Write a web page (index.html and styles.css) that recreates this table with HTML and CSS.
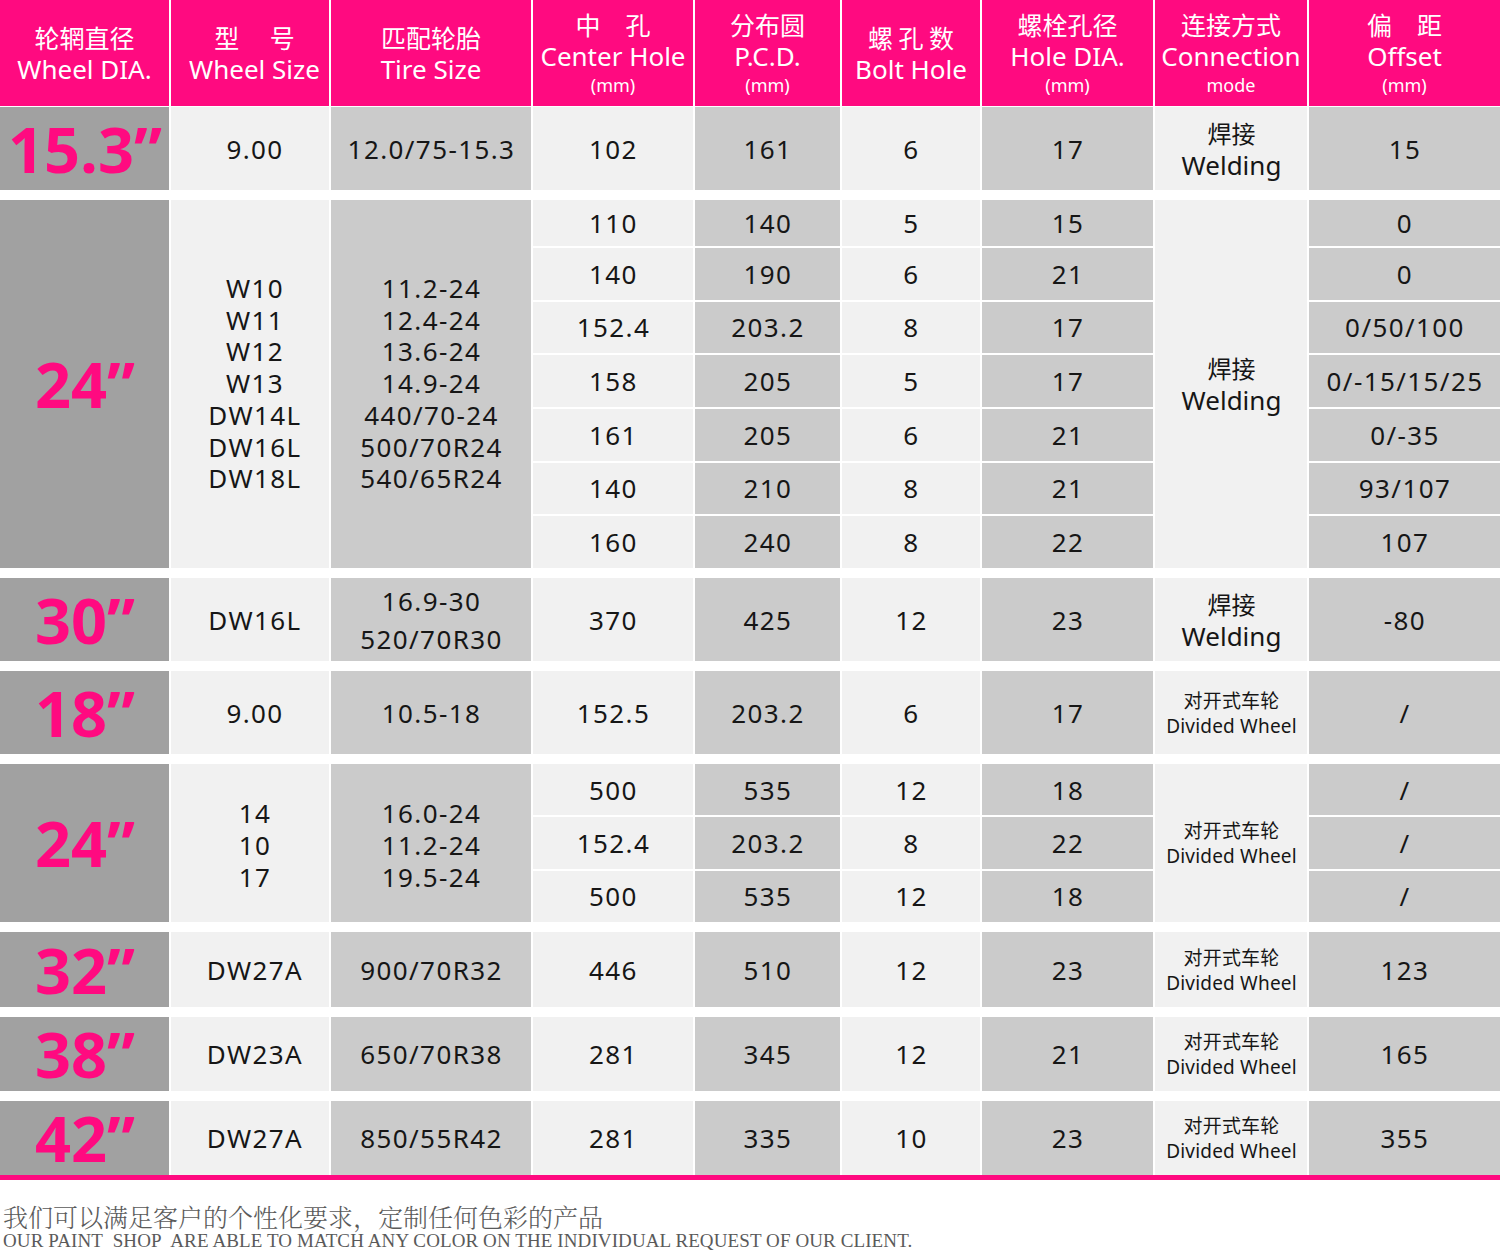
FILE: index.html
```html
<!DOCTYPE html>
<html lang="zh-CN">
<head>
    <meta charset="UTF-8">
    <meta name="viewport" content="width=device-width, initial-scale=1.0">
    <title>Wheel Specifications</title>
    <link rel="stylesheet" href="styles.css">
</head>
<body>

    <div class="spec-table">
        <!-- Header -->
        <div class="row head">
            <div class="th"><span class="zh">轮辋直径</span><span class="en">Wheel DIA.</span></div>
            <div class="th size"><span class="zh">型&emsp;&nbsp;号</span><span class="en">Wheel Size</span></div>
            <div class="th"><span class="zh">匹配轮胎</span><span class="en">Tire Size</span></div>
            <div class="th"><span class="zh">中&emsp;孔</span><span class="en">Center Hole</span><span class="unit">(mm)</span></div>
            <div class="th"><span class="zh">分布圆</span><span class="en">P.C.D.</span><span class="unit">(mm)</span></div>
            <div class="th"><span class="zh">螺 孔 数</span><span class="en">Bolt Hole</span></div>
            <div class="th"><span class="zh">螺栓孔径</span><span class="en">Hole DIA.</span><span class="unit">(mm)</span></div>
            <div class="th"><span class="zh">连接方式</span><span class="en">Connection</span><span class="unit">mode</span></div>
            <div class="th"><span class="zh">偏&emsp;距</span><span class="en">Offset</span><span class="unit">(mm)</span></div>
        </div>

        <!-- 15.3 -->
        <div class="row group h83">
            <div class="cell dia">15.3”</div>
            <div class="cell light size">9.00</div>
            <div class="cell gray">12.0/75-15.3</div>
            <div class="cell light">102</div>
            <div class="cell gray">161</div>
            <div class="cell light">6</div>
            <div class="cell gray">17</div>
            <div class="cell light lines"><span class="zh">焊接</span><span>Welding</span></div>
            <div class="cell gray">15</div>
        </div>

        <!-- 24 welding -->
        <div class="row group rows-7">
            <div class="cell dia span-7">24”</div>
            <div class="cell light size span-7 list">W10<br>W11<br>W12<br>W13<br>DW14L<br>DW16L<br>DW18L</div>
            <div class="cell gray span-7 list">11.2-24<br>12.4-24<br>13.6-24<br>14.9-24<br>440/70-24<br>500/70R24<br>540/65R24</div>

            <div class="cell light">110</div>
            <div class="cell gray">140</div>
            <div class="cell light">5</div>
            <div class="cell gray">15</div>
            <div class="cell light span-7 lines"><span class="zh">焊接</span><span>Welding</span></div>
            <div class="cell gray">0</div>

            <div class="cell light">140</div>
            <div class="cell gray">190</div>
            <div class="cell light">6</div>
            <div class="cell gray">21</div>
            <div class="cell gray">0</div>

            <div class="cell light">152.4</div>
            <div class="cell gray">203.2</div>
            <div class="cell light">8</div>
            <div class="cell gray">17</div>
            <div class="cell gray">0/50/100</div>

            <div class="cell light">158</div>
            <div class="cell gray">205</div>
            <div class="cell light">5</div>
            <div class="cell gray">17</div>
            <div class="cell gray">0/-15/15/25</div>

            <div class="cell light">161</div>
            <div class="cell gray">205</div>
            <div class="cell light">6</div>
            <div class="cell gray">21</div>
            <div class="cell gray">0/-35</div>

            <div class="cell light">140</div>
            <div class="cell gray">210</div>
            <div class="cell light">8</div>
            <div class="cell gray">21</div>
            <div class="cell gray">93/107</div>

            <div class="cell light">160</div>
            <div class="cell gray">240</div>
            <div class="cell light">8</div>
            <div class="cell gray">22</div>
            <div class="cell gray">107</div>
        </div>

        <!-- 30 -->
        <div class="row group h83">
            <div class="cell dia">30”</div>
            <div class="cell light size">DW16L</div>
            <div class="cell gray list wide">16.9-30<br>520/70R30</div>
            <div class="cell light">370</div>
            <div class="cell gray">425</div>
            <div class="cell light">12</div>
            <div class="cell gray">23</div>
            <div class="cell light lines"><span class="zh">焊接</span><span>Welding</span></div>
            <div class="cell gray">-80</div>
        </div>

        <!-- 18 -->
        <div class="row group h83">
            <div class="cell dia">18”</div>
            <div class="cell light size">9.00</div>
            <div class="cell gray">10.5-18</div>
            <div class="cell light">152.5</div>
            <div class="cell gray">203.2</div>
            <div class="cell light">6</div>
            <div class="cell gray">17</div>
            <div class="cell light lines small"><span class="zh">对开式车轮</span><span>Divided Wheel</span></div>
            <div class="cell gray">/</div>
        </div>

        <!-- 24 divided -->
        <div class="row group rows-3">
            <div class="cell dia span-3">24”</div>
            <div class="cell light size span-3 list low">14<br>10<br>17</div>
            <div class="cell gray span-3 list low">16.0-24<br>11.2-24<br>19.5-24</div>

            <div class="cell light">500</div>
            <div class="cell gray">535</div>
            <div class="cell light">12</div>
            <div class="cell gray">18</div>
            <div class="cell light span-3 lines small"><span class="zh">对开式车轮</span><span>Divided Wheel</span></div>
            <div class="cell gray">/</div>

            <div class="cell light">152.4</div>
            <div class="cell gray">203.2</div>
            <div class="cell light">8</div>
            <div class="cell gray">22</div>
            <div class="cell gray">/</div>

            <div class="cell light">500</div>
            <div class="cell gray">535</div>
            <div class="cell light">12</div>
            <div class="cell gray">18</div>
            <div class="cell gray">/</div>
        </div>

        <!-- 32 -->
        <div class="row group h75">
            <div class="cell dia">32”</div>
            <div class="cell light size">DW27A</div>
            <div class="cell gray">900/70R32</div>
            <div class="cell light">446</div>
            <div class="cell gray">510</div>
            <div class="cell light">12</div>
            <div class="cell gray">23</div>
            <div class="cell light lines small"><span class="zh">对开式车轮</span><span>Divided Wheel</span></div>
            <div class="cell gray">123</div>
        </div>

        <!-- 38 -->
        <div class="row group h74">
            <div class="cell dia">38”</div>
            <div class="cell light size">DW23A</div>
            <div class="cell gray">650/70R38</div>
            <div class="cell light">281</div>
            <div class="cell gray">345</div>
            <div class="cell light">12</div>
            <div class="cell gray">21</div>
            <div class="cell light lines small"><span class="zh">对开式车轮</span><span>Divided Wheel</span></div>
            <div class="cell gray">165</div>
        </div>

        <!-- 42 -->
        <div class="row group h74 last">
            <div class="cell dia">42”</div>
            <div class="cell light size">DW27A</div>
            <div class="cell gray">850/55R42</div>
            <div class="cell light">281</div>
            <div class="cell gray">335</div>
            <div class="cell light">10</div>
            <div class="cell gray">23</div>
            <div class="cell light lines small"><span class="zh">对开式车轮</span><span>Divided Wheel</span></div>
            <div class="cell gray">355</div>
        </div>
    </div>

    <div class="note">
        <p class="note-zh">我们可以满足客户的个性化要求，定制任何色彩的产品</p>
        <p class="note-en">OUR PAINT&nbsp; SHOP&nbsp; ARE ABLE TO MATCH ANY COLOR ON THE INDIVIDUAL REQUEST OF OUR CLIENT.</p>
    </div>

</body>
</html>
```

FILE: styles.css
```css
body {
    margin: 0;
    padding: 0;
    background-color: #ffffff;
    font-family: 'Noto Sans', 'Noto Sans CJK SC', sans-serif;
    color: #161616;
}

.spec-table {
    width: 1500px;
    border-bottom: 5px solid #ff0a80;
}

.row {
    display: grid;
    grid-template-columns: 169px 158px 200px 160px 145px 138px 171px 152px 191px;
    column-gap: 2px;
}

/* header */
.head {
    height: 106px;
    margin-bottom: 1px;
}

.th {
    background-color: #ff0a80;
    color: #ffffff;
    display: flex;
    flex-direction: column;
    align-items: center;
    justify-content: center;
    text-align: center;
}

.th .zh {
    font-family: 'Noto Sans CJK SC', sans-serif;
    font-size: 25px;
    line-height: 32px;
}

.th .en {
    font-size: 26px;
    line-height: 32px;
}

.th .unit {
    font-size: 18px;
    line-height: 26px;
}

/* the wheel size column sits a little right of centre */
.size {
    padding-left: 9px;
}

/* body rows */
.group {
    margin-bottom: 10px;
    row-gap: 2px;
}

.group.last {
    margin-bottom: 0;
}

.h83 { height: 83px; }
.h75 { height: 75px; }
.h74 { height: 74px; }

.rows-7 {
    height: 368px;
    grid-template-rows: 46px repeat(6, 1fr);
}

.rows-3 {
    height: 158px;
    grid-template-rows: repeat(3, 1fr);
}

.span-7 { grid-row: span 7; }
.span-3 { grid-row: span 3; }

.cell {
    display: flex;
    align-items: center;
    justify-content: center;
    text-align: center;
    font-size: 26px;
    line-height: 32px;
    letter-spacing: 1.4px;
    padding-left: 1px;
}

.cell.size {
    padding-left: 10px;
}

.light { background-color: #f1f1f1; }
.gray { background-color: #cbcbcb; }

.dia {
    background-color: #a1a1a1;
    color: #ff0a80;
    font-family: 'Open Sans', sans-serif;
    font-weight: 700;
    font-size: 63px;
    letter-spacing: 0;
}

.list {
    line-height: 31.7px;
}

.list.wide {
    line-height: 38px;
}

.list.low {
    padding-top: 6px;
}

.lines {
    flex-direction: column;
    letter-spacing: 0;
}

.lines .zh {
    font-family: 'Noto Sans CJK SC', sans-serif;
    font-size: 24px;
}

.lines.small {
    font-size: 19px;
    line-height: 26px;
    letter-spacing: 0.2px;
}

.lines.small .zh {
    font-size: 19px;
}

/* note under the table */
.note {
    padding: 22px 0 0 3px;
    color: #5a5a5a;
}

.note p {
    margin: 0;
}

.note-zh {
    font-family: 'Noto Serif CJK SC', 'Noto Sans CJK SC', serif;
    font-size: 25px;
    line-height: 28px;
    font-weight: 300;
}

.note-en {
    margin-top: 2px;
    font-family: 'Liberation Serif', serif;
    font-size: 19px;
    line-height: 22px;
    letter-spacing: 0.1px;
}
```
